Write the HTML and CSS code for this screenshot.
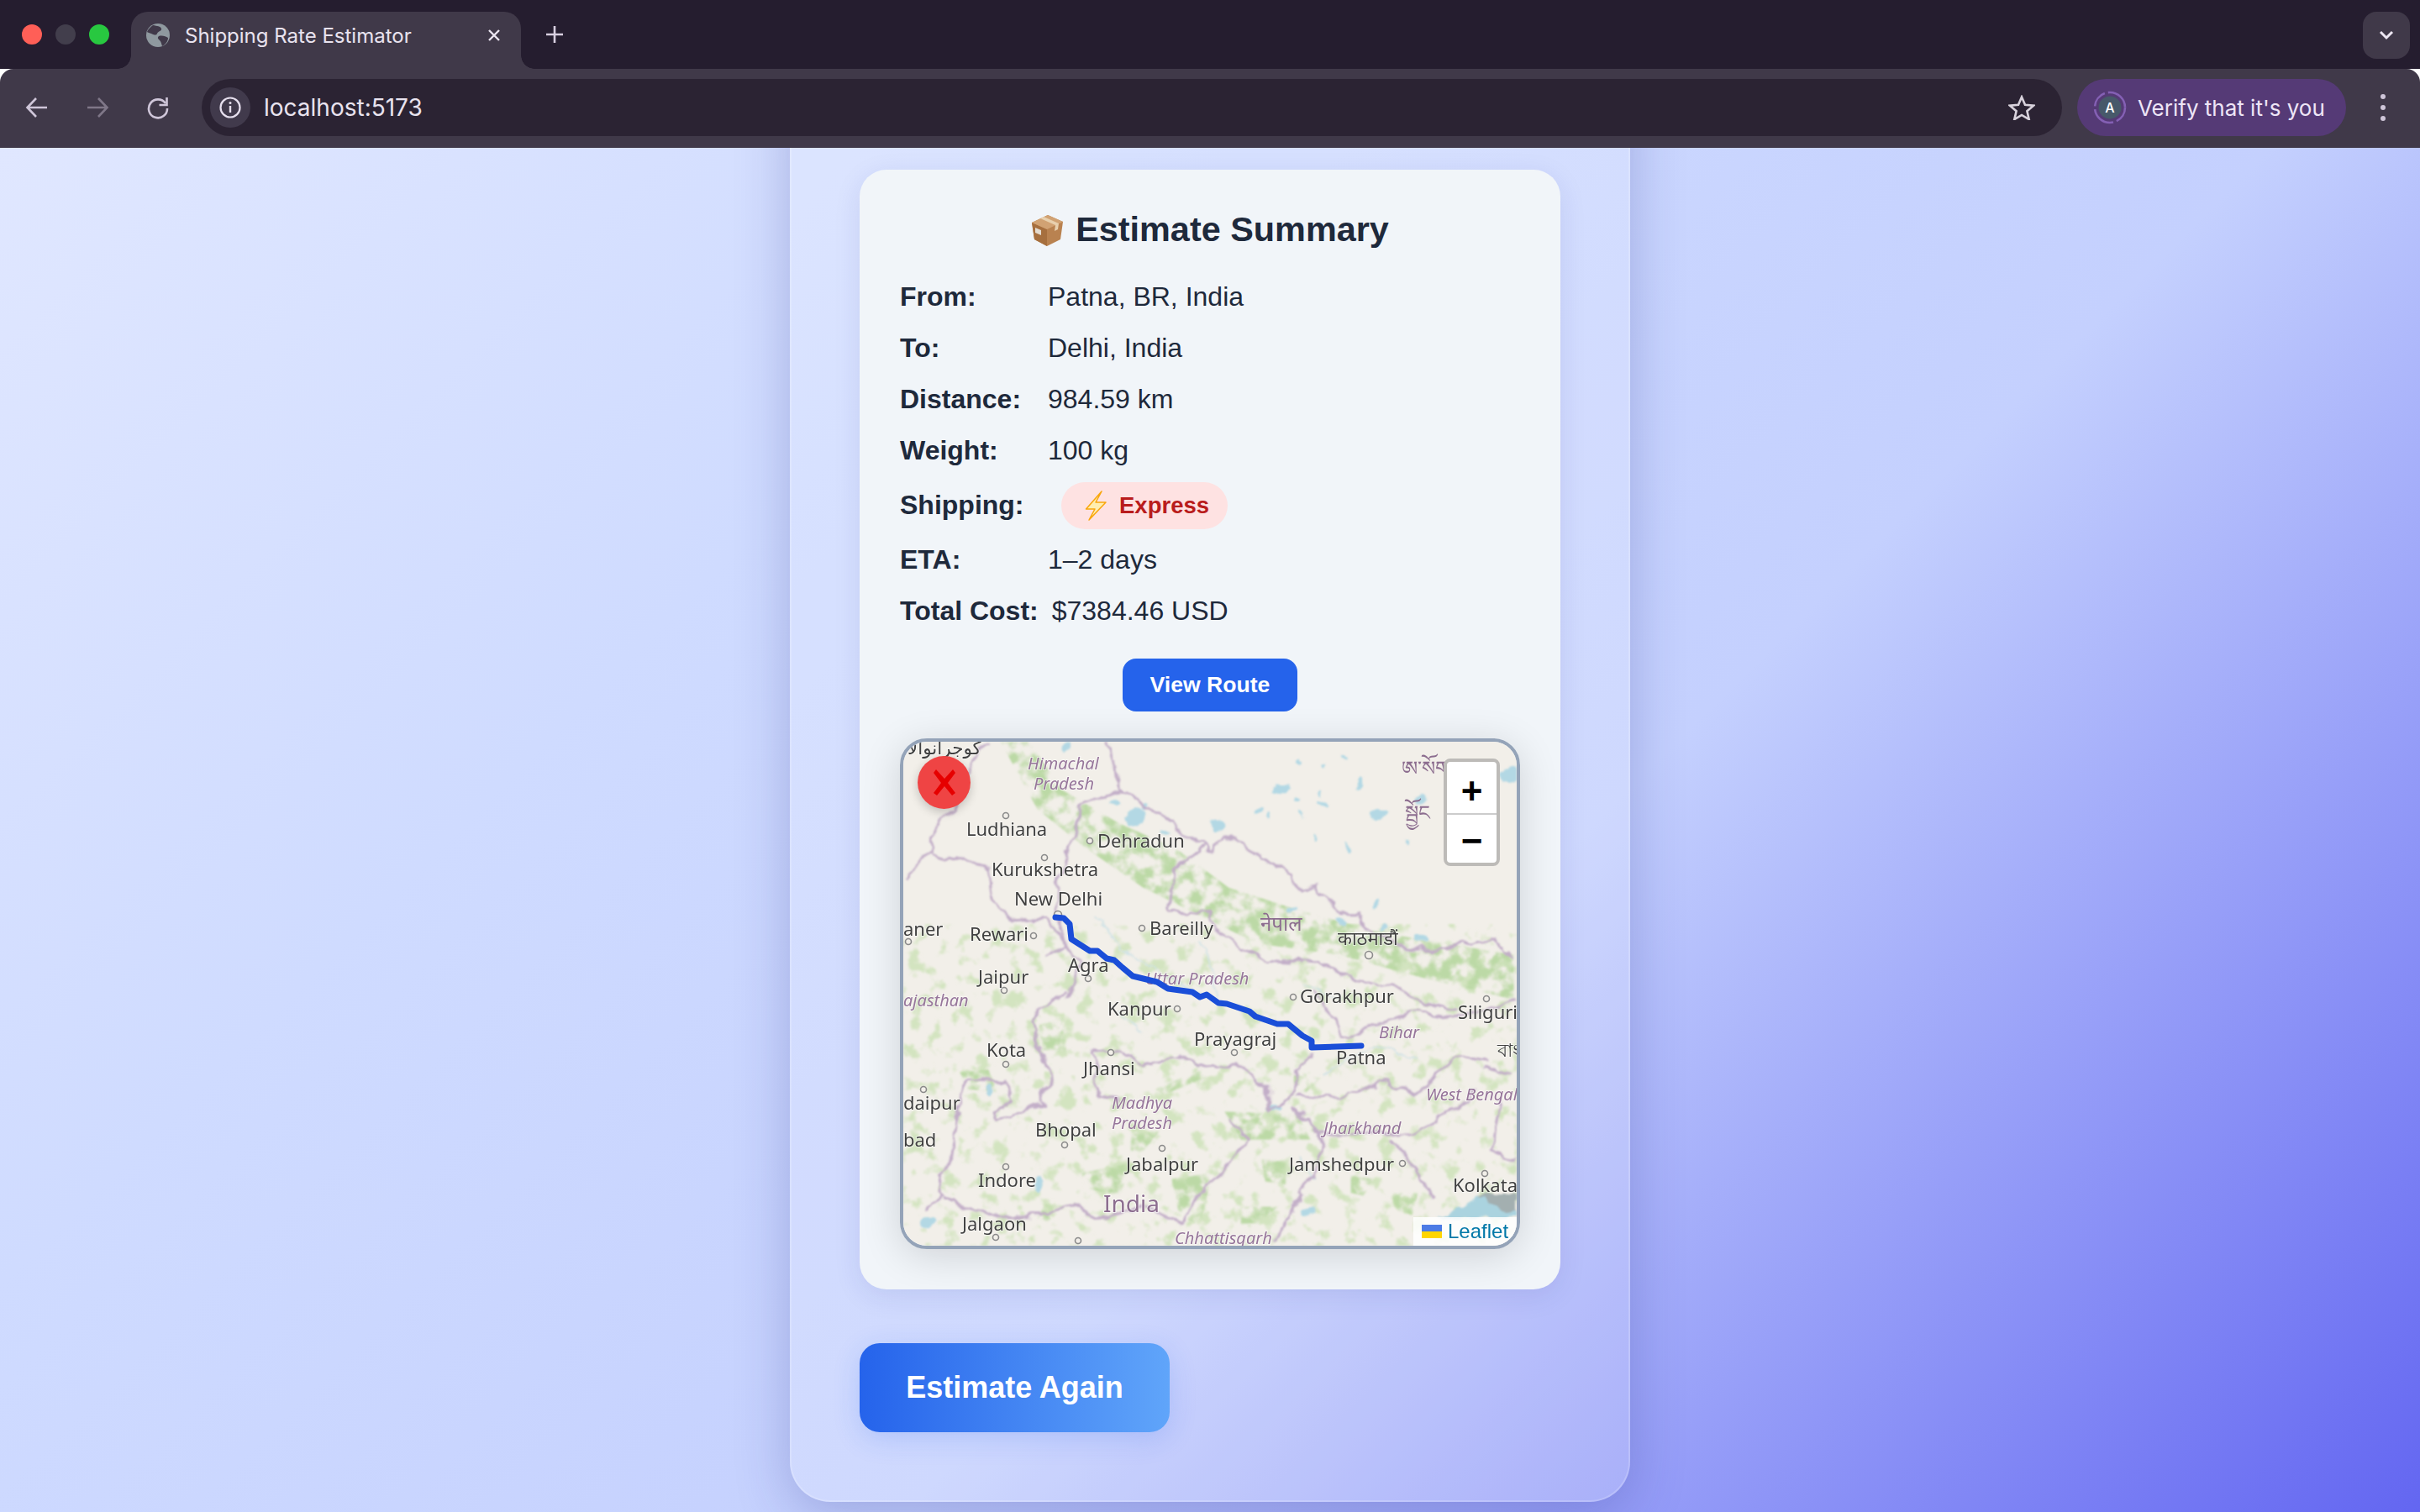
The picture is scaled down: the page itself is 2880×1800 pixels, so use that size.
FILE: index.html
```html
<!DOCTYPE html>
<html lang="en">
<head>
<meta charset="utf-8">
<title>Shipping Rate Estimator</title>
<link rel="stylesheet" href="styles.css">
</head>
<body>
<div class="browser">
  <header class="tabstrip">
    <div class="lights"><span class="light red"></span><span class="light grey"></span><span class="light green"></span></div>
    <div class="tab">
      <svg class="globe" width="28" height="28" viewBox="0 0 28 28"><circle cx="14" cy="14" r="14" fill="#8f999f"/><path d="M8 2c5 1 9 1 10 4s-4 3-5 6-5 1-7 0-4-1-5-2c1-3 4-6 7-8zM15 15c4-1 8 0 11 2 0 4-3 8-7 10-1-3-1-5-3-7s-3-3-1-5z" fill="#403949"/></svg>
      <span class="tab-title">Shipping Rate Estimator</span>
      <svg class="tab-x" width="16" height="16" viewBox="0 0 16 16"><path d="M2 2l12 12M14 2L2 14" stroke="#ece6f2" stroke-width="2.4"/></svg>
    </div>
    <svg class="newtab" width="20" height="20" viewBox="0 0 20 20"><path d="M10 0v20M0 10h20" stroke="#d8cfe0" stroke-width="2.6"/></svg>
    <div class="tab-menu"><svg width="18" height="12" viewBox="0 0 18 12"><path d="M2 2l7 7 7-7" fill="none" stroke="#ece6f2" stroke-width="3"/></svg></div>
  </header>
  <nav class="toolbar">
    <svg class="nav-icon" width="28" height="28" viewBox="0 0 28 28"><path d="M26 14H3M13 3L2.500 14 13 25" fill="none" stroke="#cfc6d9" stroke-width="2.600"/></svg>
    <svg class="nav-icon" width="28" height="28" viewBox="0 0 28 28"><path d="M2 14h23M15 3l10.500 11L15 25" fill="none" stroke="#7f7788" stroke-width="2.600"/></svg>
    <svg class="nav-icon" width="28" height="28" viewBox="0 0 28 28"><path d="M23 9A11 11 0 1 0 25 15" fill="none" stroke="#cfc6d9" stroke-width="2.600"/><path d="M24.500 2v9h-9" fill="none" stroke="#cfc6d9" stroke-width="2.600"/></svg>
    <div class="omnibox">
      <div class="info"><svg width="26" height="26" viewBox="0 0 26 26"><circle cx="13" cy="13" r="11.500" fill="none" stroke="#e6dfee" stroke-width="2.200"/><path d="M13 11v8" stroke="#e6dfee" stroke-width="2.400"/><circle cx="13" cy="7.500" r="1.500" fill="#e6dfee"/></svg></div>
      <span class="url">localhost:5173</span>
      <svg class="star" width="32" height="30" viewBox="0 0 32 30"><path d="M16 2.500l4 9.300 10 .9-7.600 6.600 2.300 9.800L16 23.900 7.300 29.100l2.300-9.800L2 12.700l10-.9z" fill="none" stroke="#d8d2dc" stroke-width="2.600"/></svg>
    </div>
    <div class="verify">
      <svg class="avatar" width="40" height="52" viewBox="0 0 40 52"><circle cx="20" cy="26" r="18" fill="none" stroke="#8460b4" stroke-width="2.600" stroke-dasharray="20 4 30 4"/><circle cx="20" cy="26" r="13.500" fill="#47596a"/><text x="20" y="32" class="avatar-letter">A</text></svg>
      <span class="verify-text">Verify that it's you</span>
    </div>
    <div class="kebab"><span></span><span></span><span></span></div>
  </nav>
  <main class="page">
    <section class="glass">
      <article class="summary">
        <h2 class="summary-title">
          <svg class="box-emoji" width="40" height="40" viewBox="0 0 40 40"><path d="M20 2L38 10 35 31 19 39 4 31 1 11z" fill="#b98250"/><path d="M1 11l18 8v20L4 31z" fill="#a66f3e"/><path d="M20 2l18 8-19 9-18-8z" fill="#d1a273"/><path d="M11 6l18 8-1 7 4-2 1-7-18-8z" fill="#e8d0ae"/><path d="M5 17l7 3v6l-7-3z" fill="#e4dbcf"/></svg>
          <span>Estimate Summary</span>
        </h2>
        <div class="row"><b class="label">From:</b><span>Patna, BR, India</span></div>
        <div class="row"><b class="label">To:</b><span>Delhi, India</span></div>
        <div class="row"><b class="label">Distance:</b><span>984.59 km</span></div>
        <div class="row"><b class="label">Weight:</b><span>100 kg</span></div>
        <div class="row row-ship"><b class="label">Shipping:</b>
          <span class="badge">
            <svg class="bolt" width="26" height="36" viewBox="0 0 26 36"><path d="M20 1L1.500 22H12L5 35 25 14H13z" fill="#ffeeb0" stroke="#f9a60b" stroke-width="1.500" stroke-linejoin="round"/></svg>
            <span>Express</span>
          </span>
        </div>
        <div class="row"><b class="label">ETA:</b><span>1–2 days</span></div>
        <div class="row"><b class="label">Total Cost:</b><span>$7384.46 USD</span></div>
        <div class="route-action"><button class="btn-route">View Route</button></div>
        <div class="map">
          <svg class="map-canvas" width="730" height="600" viewBox="1075 883 730 600">
            <defs>
              <filter id="soft" x="0" y="0" width="100%" height="100%"><feGaussianBlur stdDeviation="0.600"/></filter>
              <filter id="wiggle" filterUnits="userSpaceOnUse" x="1075" y="883" width="730" height="600">
                <feTurbulence type="fractalNoise" baseFrequency="0.045" numOctaves="3" seed="4" result="t"/>
                <feDisplacementMap in="SourceGraphic" in2="t" scale="16" xChannelSelector="R" yChannelSelector="G"/>
                <feGaussianBlur stdDeviation="0.800"/>
              </filter>
              <filter id="mottle" filterUnits="userSpaceOnUse" x="1075" y="883" width="730" height="600">
                <feTurbulence type="fractalNoise" baseFrequency="0.06" numOctaves="4" seed="7" result="n"/>
                <feColorMatrix in="n" type="matrix" values="0 0 0 0 0  0 0 0 0 0  0 0 0 0 0  4 0 0 0 -1.550" result="m"/>
                <feComposite in="SourceGraphic" in2="m" operator="in"/>
                <feGaussianBlur stdDeviation="1"/>
              </filter>
              <filter id="sparse" filterUnits="userSpaceOnUse" x="1075" y="883" width="730" height="600">
                <feTurbulence type="fractalNoise" baseFrequency="0.05" numOctaves="4" seed="21" result="n"/>
                <feColorMatrix in="n" type="matrix" values="0 0 0 0 0  0 0 0 0 0  0 0 0 0 0  6 0 0 0 -3.250" result="m"/>
                <feComposite in="SourceGraphic" in2="m" operator="in"/>
                <feGaussianBlur stdDeviation="1.200"/>
              </filter>
            </defs>
            <rect class="land" x="1075" y="883" width="730" height="600"/>
            <rect class="green-wash" x="1075" y="1100" width="730" height="383" filter="url(#sparse)"/>
            <g filter="url(#mottle)">
              <g transform="translate(1060 870) scale(.4847 .3333)" class="forest">
                <path d="M270 40L340 40 420 210 560 330 700 420 830 560 1000 640 1200 720 1530 800 1530 960 1300 880 1100 800 900 760 760 660 620 560 480 420 360 280z"/>
              </g>
              <g transform="translate(1060 1170) scale(.4847 .3333)" class="forest">
                <path d="M365 150L420 130 430 240 370 240z"/><path d="M650 380L760 310 770 340 670 400z"/>
                <path d="M820 460L1000 470 1030 560 860 560z"/><path d="M910 630L970 640 970 720 920 710z"/>
                <path d="M470 680L600 640 560 760 470 730z"/><path d="M690 700L790 680 760 860 710 840z"/>
                <path d="M1230 750L1295 750 1280 830 1240 810z"/><path d="M990 330L1055 340 1020 390 990 380z"/>
                <path d="M590 540L660 530 620 600 590 600z"/><path d="M170 320L240 310 260 390 190 380z"/>
                <path d="M860 800L950 800 900 860 860 860z"/><path d="M380 790L440 800 400 860 360 840z"/>
                <path d="M1130 690L1190 700 1160 760 1130 750z"/>
              </g>
            </g>
            <g filter="url(#wiggle)">
              <g transform="translate(1060 870) scale(.4847 .3333)">
                <g class="water">
                  <ellipse cx="432" cy="60" rx="12" ry="20"/><ellipse cx="600" cy="310" rx="30" ry="30"/><ellipse cx="550" cy="260" rx="14" ry="10"/><ellipse cx="630" cy="280" rx="9" ry="12"/>
                  <ellipse cx="672" cy="360" rx="10" ry="8"/><ellipse cx="800" cy="335" rx="18" ry="18"/><ellipse cx="960" cy="200" rx="20" ry="14"/><ellipse cx="995" cy="243" rx="8" ry="9"/>
                  <ellipse cx="1060" cy="265" rx="16" ry="9"/><ellipse cx="1050" cy="225" rx="5" ry="16"/><ellipse cx="1150" cy="186" rx="8" ry="20"/><ellipse cx="1200" cy="297" rx="22" ry="18"/>
                  <ellipse cx="1300" cy="245" rx="9" ry="18"/><ellipse cx="1520" cy="155" rx="16" ry="28"/><ellipse cx="902" cy="283" rx="7" ry="12"/><ellipse cx="925" cy="310" rx="5" ry="9"/>
                  <ellipse cx="1118" cy="98" rx="6" ry="8"/><ellipse cx="1060" cy="122" rx="7" ry="5"/><ellipse cx="1005" cy="108" rx="4" ry="10"/><ellipse cx="1197" cy="615" rx="7" ry="16"/>
                  <ellipse cx="1275" cy="400" rx="4" ry="14"/><ellipse cx="1120" cy="410" rx="5" ry="20"/><ellipse cx="1050" cy="380" rx="3" ry="12"/><ellipse cx="1010" cy="305" rx="4" ry="12"/>
                  <ellipse cx="990" cy="645" rx="18" ry="9"/><ellipse cx="1105" cy="682" rx="12" ry="12"/><ellipse cx="1208" cy="700" rx="9" ry="12"/><ellipse cx="1300" cy="745" rx="16" ry="14"/>
                </g>
                <path class="river" d="M500 650L560 780 650 850 760 940M760 740L790 850 800 960M1010 900L1100 960"/>
                <g class="border">
                  <path d="M525 40L555 130 560 210 590 215 630 285 690 320 700 350 770 410 790 440 815 375 870 400 880 430 980 510 1010 570 1040 550 1080 610 1110 650 1150 650 1170 710 1250 770 1330 790 1430 760 1480 740 1530 810"/>
                  <path d="M770 410L700 490 680 620 720 660 780 640 800 720 920 820 1040 830 1140 880 1250 920 1310 970 1390 1000"/>
                  <path d="M240 40L200 110 170 240 100 380 100 430 30 530"/>
                  <path d="M100 440L160 460 240 490 250 610 300 680 390 670 430 770 380 810"/>
                  <path d="M560 210L470 260 450 400 410 520 405 640 430 770 460 830 430 960"/>
                </g>
              </g>
              <g transform="translate(1060 1170) scale(.4847 .3333)">
                <path class="sea" d="M1340 838L1400 800 1440 760 1480 790 1537 760 1537 840z"/>
                <path class="mangrove" d="M1440 760L1537 750 1537 820 1470 800z"/>
                <ellipse class="water" cx="245" cy="385" rx="10" ry="26"/><ellipse class="water" cx="365" cy="725" rx="8" ry="26"/><ellipse class="water" cx="940" cy="450" rx="14" ry="14"/><ellipse class="water" cx="1025" cy="815" rx="14" ry="14"/><ellipse class="water" cx="90" cy="860" rx="18" ry="20"/>
                <path class="river" d="M1060 340L1110 280 1190 230 1300 260M560 100L620 180M1000 620L1040 700"/>
                <g class="border">
                  <path d="M430 30L370 90 345 150 380 290 390 340 370 430 260 490 250 460 300 420 280 350 190 340 175 400 150 620 120 690 130 760 90 800"/>
                  <path d="M500 250L560 240 620 300 700 260 770 300 850 290 930 370 930 460 990 400 1000 300 1040 240"/>
                  <path d="M500 250L510 400 560 420"/>
                  <path d="M1000 400L1100 410 1210 345 1290 400 1390 260 1460 280"/>
                  <path d="M830 490L880 560 800 700 740 780 720 860"/>
                  <path d="M990 450L1060 540 1050 660 960 880 940 930"/>
                  <path d="M1060 540L1270 540 1390 450 1440 380"/>
                  <path d="M1230 560L1340 770"/>
                  <path d="M130 770L250 830 370 830 430 790 520 840 620 800 720 860"/>
                  <path d="M1040 30L1110 190 1300 100 1400 130 1537 60"/>
                  <path d="M1450 300L1530 330M1500 420L1480 600 1537 640"/>
                </g>
              </g>
            </g>
            <g filter="url(#soft)">
              <g class="dots">
                <circle cx="1197" cy="971" r="3.500"/><circle cx="1297" cy="1001" r="3.500"/><circle cx="1243" cy="1021" r="3.500"/><circle cx="1259" cy="1089" r="4.500"/>
                <circle cx="1081" cy="1121" r="3.500"/><circle cx="1230" cy="1114" r="3.500"/><circle cx="1359" cy="1105" r="3.500"/><circle cx="1629" cy="1137" r="4.500"/>
                <circle cx="1295" cy="1165" r="3.500"/><circle cx="1195" cy="1179" r="3.500"/><circle cx="1539" cy="1187" r="3.500"/><circle cx="1401" cy="1201" r="3.500"/>
                <circle cx="1769" cy="1189" r="3.500"/><circle cx="1469" cy="1253" r="3.500"/><circle cx="1197" cy="1267" r="3.500"/><circle cx="1322" cy="1253" r="3.500"/>
                <circle cx="1099" cy="1297" r="3.500"/><circle cx="1267" cy="1363" r="3.500"/><circle cx="1383" cy="1367" r="3.500"/><circle cx="1669" cy="1385" r="3.500"/>
                <circle cx="1197" cy="1389" r="3.500"/><circle cx="1767" cy="1397" r="3.500"/><circle cx="1185" cy="1473" r="3.500"/><circle cx="1283" cy="1477" r="3.500"/>
              </g>
              <g class="city">
                <text x="1150" y="995">Ludhiana</text><text x="1306" y="1009">Dehradun</text><text x="1180" y="1043">Kurukshetra</text><text x="1207" y="1078">New Delhi</text>
                <text x="1075" y="1114">aner</text><text x="1154" y="1120">Rewari</text><text x="1368" y="1113">Bareilly</text><text x="1592" y="1125">काठमाडौं</text>
                <text x="1271" y="1157">Agra</text><text x="1164" y="1171">Jaipur</text><text x="1547" y="1194">Gorakhpur</text><text x="1318" y="1209">Kanpur</text>
                <text x="1735" y="1213">Siliguri</text><text x="1421" y="1245">Prayagraj</text><text x="1590" y="1267">Patna</text><text x="1174" y="1258">Kota</text>
                <text x="1289" y="1280">Jhansi</text><text x="1075" y="1321">daipur</text><text x="1075" y="1365">bad</text><text x="1232" y="1353">Bhopal</text>
                <text x="1340" y="1394">Jabalpur</text><text x="1534" y="1394">Jamshedpur</text><text x="1164" y="1413">Indore</text><text x="1729" y="1419">Kolkata</text>
                <text x="1145" y="1465">Jalgaon</text><text class="arabic" x="1080" y="898">كوجرانوالا</text><text x="1782" y="1258">বাং</text>
              </g>
              <g class="region">
                <text x="1223" y="916">Himachal</text><text x="1230" y="940">Pradesh</text><text x="1363" y="1172">Uttar Pradesh</text><text x="1075" y="1198">ajasthan</text>
                <text x="1641" y="1236">Bihar</text><text x="1697" y="1310">West Bengal</text><text x="1323" y="1320">Madhya</text><text x="1323" y="1344">Pradesh</text>
                <text x="1575" y="1350">Jharkhand</text><text x="1398" y="1481">Chhattisgarh</text>
              </g>
              <text class="country" x="1313" y="1443">India</text>
              <text class="country-small" x="1500" y="1108">नेपाल</text>
              <text class="country-small" x="1668" y="923">ཨ་སོག</text>
              <text class="country-small" x="1672" y="976">སྦྱོང</text>
            </g>
            <path class="route" d="M1256 1092L1266 1093 1273 1100 1275 1118 1297 1132 1306 1132 1317 1141 1326 1143 1336 1152 1348 1162 1377 1169 1390 1177 1419 1181 1428 1187 1436 1184 1450 1194 1460 1195 1487 1204 1494 1210 1520 1219 1533 1219 1550 1233 1561 1239 1561 1247 1620 1245"/>
          </svg>
          <button class="map-close"><svg width="30" height="36" viewBox="0 0 30 36"><path d="M5 2l10 11L25 2l3 4-9 12 9 12-4 3-9-11-9 11-4-3 9-12-9-12z" fill="#e60000"/></svg></button>
          <div class="zoom">
            <span class="zoom-btn zoom-in">+</span>
            <span class="zoom-btn">−</span>
          </div>
          <div class="attribution"><span class="flag"></span><span class="leaflet">Leaflet</span></div>
        </div>
      </article>
      <button class="btn-again">Estimate Again</button>
    </section>
  </main>
</div>
</body>
</html>
```
FILE: styles.css
```css
* { box-sizing: border-box; }
html, body { margin: 0; height: 100%; }
body { font-family: "Liberation Sans", Arial, sans-serif; overflow: hidden; }
.browser { height: 1800px; display: flex; flex-direction: column; }

.tabstrip { height: 82px; background: #251d2f; display: flex; align-items: flex-start; flex: none; }
.lights { display: flex; gap: 16px; padding: 29px 0 0 26px; width: 156px; flex: none; }
.light { width: 24px; height: 24px; border-radius: 50%; }
.red { background: #ff5f57; }
.grey { background: #423e4c; }
.green { background: #28c840; }
.tab { position: relative; margin-top: 14px; width: 464px; height: 68px; background: #403949; border-radius: 20px 20px 0 0; display: flex; align-items: center; padding: 0 24px 12px 18px; flex: none; }
.tab::before, .tab::after { content: ""; position: absolute; bottom: 0; width: 16px; height: 16px; }
.tab::before { left: -16px; background: radial-gradient(circle at 0 0, transparent 15.500px, #403949 16px); }
.tab::after { right: -16px; background: radial-gradient(circle at 100% 0, transparent 15.500px, #403949 16px); }
.globe { flex: none; }
.tab-title { margin-left: 18px; font: 400 24px "Inter", sans-serif; color: #e9e3ef; flex: 1; white-space: nowrap; }
.tab-x { flex: none; }
.newtab { margin: 31px 0 0 30px; flex: none; }
.tab-menu { margin: 14px 12px 0 auto; width: 56px; height: 56px; border-radius: 16px; background: #403949; display: flex; align-items: center; justify-content: center; }

.toolbar { height: 94px; flex: none; background: #403949; display: flex; align-items: center; padding: 0 0 2px 30px; border-radius: 16px 16px 0 0; }
.nav-icon { flex: none; margin-right: 44px; }
.nav-icon:nth-child(3) { margin-right: 38px; }
.omnibox { width: 2214px; height: 68px; border-radius: 34px; background: #2b2333; display: flex; align-items: center; padding: 0 32px 0 10px; flex: none; }
.info { width: 48px; height: 48px; border-radius: 50%; background: #413a4c; display: flex; align-items: center; justify-content: center; flex: none; }
.url { margin-left: 16px; font: 400 28px "Inter", sans-serif; color: #e9e3ef; flex: 1; }
.star { flex: none; }
.verify { margin-left: 18px; width: 320px; height: 68px; border-radius: 34px; background: #553a76; display: flex; align-items: center; padding-left: 19px; flex: none; }
.avatar { flex: none; }
.avatar-letter { font: 500 16px "Inter", sans-serif; fill: #fff; text-anchor: middle; }
.verify-text { margin-left: 13px; font: 400 26px "Inter", sans-serif; color: #eee5f6; white-space: nowrap; }
.kebab { margin-left: 41px; display: flex; flex-direction: column; gap: 7px; flex: none; }
.kebab span { width: 6px; height: 6px; border-radius: 50%; background: #cfc6d9; }

.page { flex: 1; min-height: 0; overflow: hidden; display: flex; justify-content: center; align-items: flex-end; padding-bottom: 12px; background: linear-gradient(135deg, #e0e7ff 0%, #cfdbff 30%, #c4d0fe 60%, #6366f1 100%); }
.glass { width: 1000px; flex: none; padding: 120px 81px 81px; border-radius: 48px; border: 2px solid rgba(255,255,255,.18); background: rgba(255,255,255,.18); box-shadow: 0 16px 64px rgba(31,38,135,.25); }
.summary { background: #f1f5f9; border-radius: 32px; padding: 47px 48px 48px; box-shadow: 0 8px 32px rgba(31,38,135,.1); color: #1e293b; font-size: 32px; }
.summary-title { margin: 0; height: 74px; display: flex; align-items: flex-start; justify-content: center; gap: 13px; font-size: 41.400px; line-height: 48px; font-weight: 700; color: #1e293b; }
.box-emoji { flex: none; margin-top: 5px; }
.row { min-height: 60.900px; display: flex; align-items: center; white-space: nowrap; }
.row-ship { min-height: 69.400px; }
.label { display: block; min-width: 160px; margin-right: 16px; font-weight: 700; flex: none; }
.badge { margin-left: 16px; height: 56px; width: 198px; padding-left: 28px; border-radius: 28px; background: #fee2e2; color: #b91c1c; font-weight: 700; font-size: 27.500px; display: flex; align-items: center; gap: 15px; }
.bolt { flex: none; }
.route-action { display: flex; justify-content: center; margin-top: 26px; }
.btn-route { width: 208px; height: 63px; border: 0; border-radius: 16px; background: #2563eb; color: #fff; font: 700 26.600px "Liberation Sans", sans-serif; }

.map { position: relative; margin-top: 32px; height: 608px; border: 4px solid #94a3b8; border-radius: 32px; overflow: hidden; box-shadow: 0 8px 48px rgba(0,0,0,.14); }
.map-canvas { display: block; }
.land { fill: #f2efe9; }
.green-wash { fill: #d3e4c0; }
.forest path { fill: #bcd9a6; }
.water, .water ellipse { fill: #b3d8e4; }
.river { fill: none; stroke: #cfe2e6; stroke-width: 1.500; vector-effect: non-scaling-stroke; }
.sea { fill: #aad3df; }
.mangrove { fill: #a3afb0; }
.border path { fill: none; stroke: #c2aec8; stroke-width: 3; vector-effect: non-scaling-stroke; stroke-linejoin: round; }
.dots circle { fill: #f2efe9; stroke: #8a8a8a; stroke-width: 1.600; }
.city text { font: 400 22px "Noto Sans", "DejaVu Sans", sans-serif; fill: #3f3f3f; stroke: rgba(255,255,255,.5); stroke-width: 2px; paint-order: stroke; }
.city .arabic { font-size: 21.500px; }
.region text { font: italic 400 20px "Noto Sans", sans-serif; fill: #96759a; stroke: rgba(255,255,255,.5); stroke-width: 2px; paint-order: stroke; }
.country { font: 400 28px "Noto Sans", sans-serif; fill: #8c6d8f; stroke: rgba(255,255,255,.6); stroke-width: 2px; paint-order: stroke; }
.country-small { font: 400 24px "Noto Sans", "DejaVu Sans", sans-serif; fill: #8c6d8f; }
.route { fill: none; stroke: #1a4ed8; stroke-width: 7; stroke-linejoin: round; stroke-linecap: round; }
.map-close { position: absolute; left: 17px; top: 17px; width: 63px; height: 63px; border: 0; padding: 0; border-radius: 50%; background: #ef4444; box-shadow: 0 4px 12px rgba(0,0,0,.2); display: flex; align-items: center; justify-content: center; }
.zoom { position: absolute; right: 20px; top: 20px; width: 67px; height: 128px; border: 4px solid #bdbbb8; border-radius: 8px; background: #fff; display: flex; flex-direction: column; }
.zoom-btn { flex: 1; display: flex; align-items: center; justify-content: center; padding-top: 6px; font: 700 44px "Liberation Sans", sans-serif; color: #000; }
.zoom-in { padding-top: 9px; }
.zoom-btn + .zoom-btn { border-top: 2px solid #ccc; }
.attribution { position: absolute; right: 0; bottom: 0; width: 123px; height: 34px; background: rgba(255,255,255,.85); display: flex; align-items: center; padding-left: 10px; gap: 7px; }
.flag { width: 24px; height: 16px; flex: none; background: linear-gradient(#4c7be5 50%, #ffd500 50%); }
.leaflet { font: 400 24px "Liberation Sans", sans-serif; color: #0078a8; }

.btn-again { display: block; margin-top: 64px; width: 369px; height: 106px; border: 0; border-radius: 24px; background: linear-gradient(90deg, #2563eb, #60a5fa); color: #fff; font: 700 36px "Liberation Sans", sans-serif; box-shadow: 0 8px 32px rgba(37,99,235,.18); }
```
